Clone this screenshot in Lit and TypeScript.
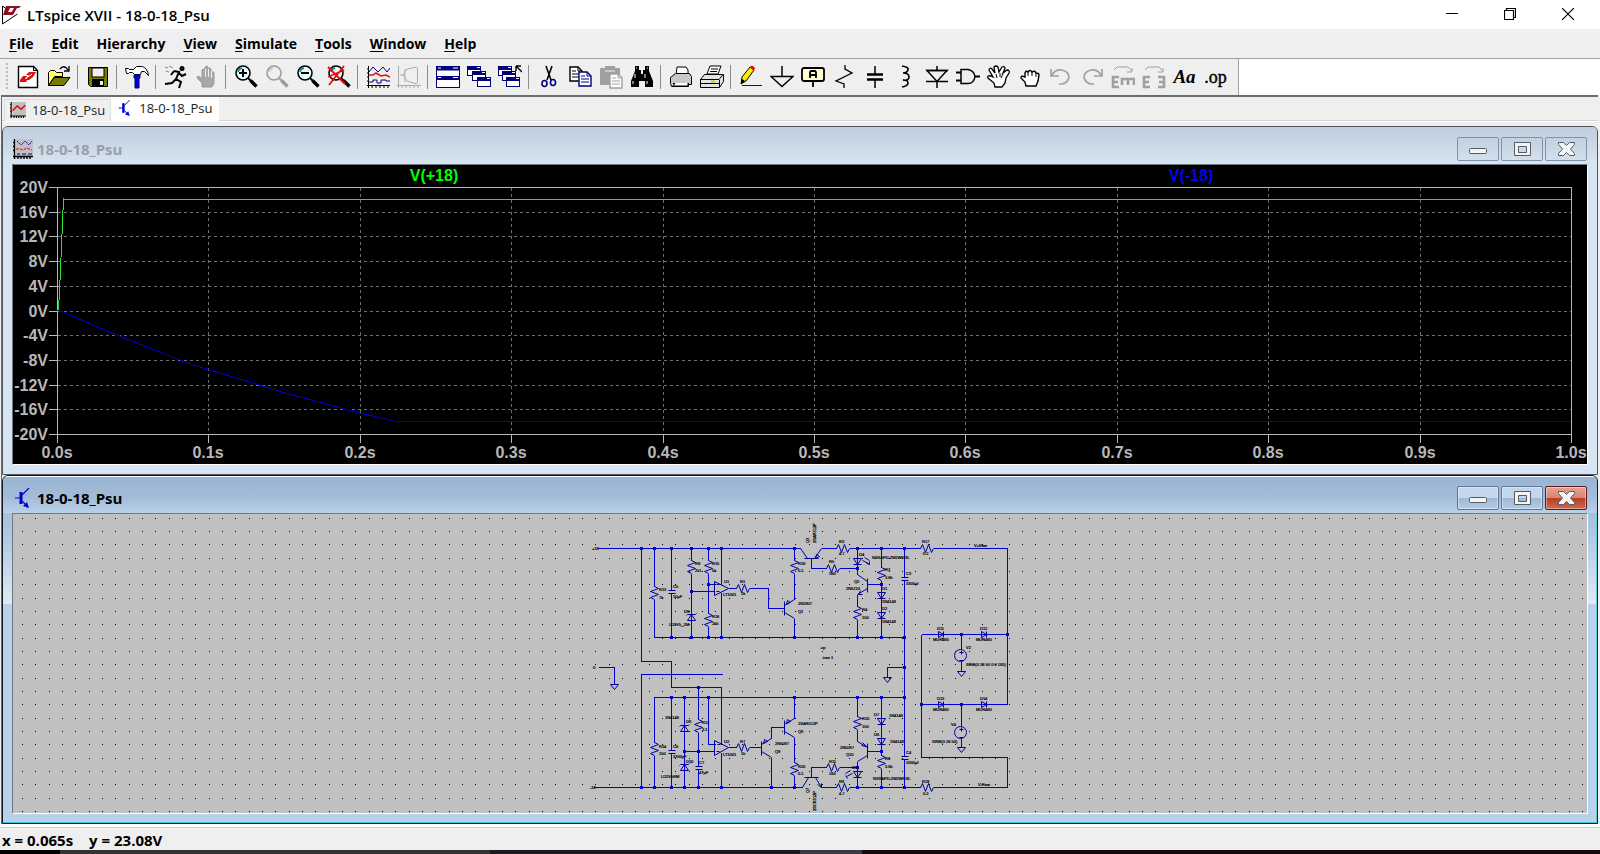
import { LitElement, html, svg, css, TemplateResult } from "lit";
import { customElement } from "lit/decorators.js";
import { classMap } from "lit/directives/class-map.js";

const lens = (inner: TemplateResult, stroke = "#000", rim = "#008080", fill = "#e8ffff") => svg`
  <circle cx="9" cy="8" r="7" fill=${fill} stroke=${stroke} stroke-width="1.6"/>
  <path d="M4 7a5 5 0 0 1 4-4" fill="none" stroke=${rim} stroke-width="1.4"/>
  <path d="M14 13l3 3" stroke=${stroke} stroke-width="2"/><path d="M16.500 15.500l6 6" stroke=${stroke} stroke-width="3.400"/>${inner}`;

const miniWindow = (x: number, y: number) => svg`
  <rect x=${x + 0.5} y=${y + 0.5} width="13" height="9" fill="#fff" stroke="#00007b"/>
  <path d=${`M${x} ${y + 2}h14`} stroke="#00007b" stroke-width="4"/>
  <path d=${`M${x + 10} ${y + 1.5}h3`} stroke="#fff"/>`;

const sheet = (x: number, y: number, c: string) => svg`
  <path d=${`M${x} ${y}h8l4 4v10h-12z`} fill="#fff" stroke=${c} stroke-width="1.4"/>
  <path d=${`M${x + 8} ${y}v4h4M${x + 2} ${y + 4}h4M${x + 2} ${y + 7}h8M${x + 2} ${y + 10}h8`} fill="none" stroke=${c}/>`;

const ICONS: Record<string, TemplateResult> = {
  new: svg`<path d="M2.500 1.500h15l4 4v17h-19z" fill="#fff" stroke="#000" stroke-width="1.400"/><path d="M17.500 1.500v4h4" fill="none" stroke="#000"/>
    <path d="M4 15l3-4h4l-2 3h3l-2 3h-6zM10 10l3-3h7l-3 5-4 3h-3l3-5z" fill="#e01010"/><path d="M12 12l4-3" stroke="#fff"/>`,
  open: svg`<path d="M1.500 20.500v-13l2-2h4l2 2h6v4h-8z" fill="#ffff66" stroke="#000"/><path d="M1.500 20.500l6-8h15.500l-6 8z" fill="#7b7b00" stroke="#000"/>
    <path d="M13 4q4-5 8 1M22 1v5h-5" fill="none" stroke="#000" stroke-width="1.300"/>`,
  save: svg`<path d="M2.500 2.500h19v19h-17l-2-2z" fill="#7b7b00" stroke="#000"/><rect x="6" y="3" width="12" height="9" fill="#efefef" stroke="#000"/><rect x="6" y="14" width="12" height="7" fill="#000"/><rect x="14" y="16" width="3" height="4" fill="#efefef"/>`,
  hammer: svg`<path d="M0.500 3.500h3l1 1h4l3-3h6q5 2 6 9l-4-4h-3l-1 3h-6l-2-2h-3l-1 1h-2z" fill="#fff" stroke="#000"/><path d="M10 10h5v3h-1v10h-4v-10h-1v-3" fill="#0000d8" stroke="#00007b"/>`,
  run: svg`<circle cx="18" cy="3.500" r="2.500"/><path d="M10 6l5 1-3 7 5 3-2 6M12 14l-4 4-7 1M15 8l3 3 4-2M10 6l-3 4" fill="none" stroke="#000" stroke-width="2"/><path d="M1 2l3 1M5 1l4 2M2 6l3 1" stroke="#888"/>`,
  halt: svg`<path d="M7 22v-4l-5-5q0-3 3-1l2 2v-9q1-2 3 0v-3q2-2 3 0v2q2-2 3 0v3q3-1 3 1v10l-2 4z" fill="#a8a8a8" stroke="#999"/><path d="M10.500 4v8M13.500 4v8M16.500 6v7" stroke="#efefef"/>`,
  zoomIn: svg`${lens(svg`<path d="M5 8h8M9 4v8" stroke="#000" stroke-width="2"/>`)}`,
  zoom: svg`${lens(svg``, "#9c9c9c", "#c4c4c4", "#efefef")}`,
  zoomOut: svg`${lens(svg`<path d="M5 8h8" stroke="#000" stroke-width="2"/>`)}`,
  zoomFit: svg`${lens(svg`<path d="M1 2l17 17M17 1l-15 19M1 12l16-7" stroke="#e01010" stroke-width="1.800"/>`)}`,
  plot: svg`<path d="M1 20.500h23M2.500 1v22M6 21v2M10 21v2M14 21v2M18 21v2M22 21v2M1 4h2M1 8h2M1 12h2M1 16h2" stroke="#000"/>
    <path d="M3 7l4-5 5 5 5-5 4 5 3-4" fill="none" stroke="#0000a0"/><path d="M3 10h4l3-2 5 3 5-1 4 2" fill="none" stroke="#e01010" stroke-width="1.500"/><path d="M3 17h4v-2h4v3h4v-3h5v1h4" fill="none" stroke="#00007b"/>`,
  fft: svg`<path d="M0 20.500h24M1.500 1v22M5 21v2M9 21v2M13 21v2M17 21v2M21 21v2M20.500 3v15M3 10h3l4-6 10-2M6 10l4 6 10 3M8 4v13" fill="none" stroke="#aaa"/>`,
  tile: svg`<rect x="0.500" y="1.500" width="23" height="21" fill="#fff" stroke="#00007b"/><path d="M0 3.500h24M0 13h24" stroke="#00007b" stroke-width="4"/><path d="M2 3h3M17 3h5M2 12.500h3M17 12.500h5" stroke="#fff"/>`,
  cascade: svg`${miniWindow(0, 1)}${miniWindow(5, 6)}${miniWindow(10, 12)}`,
  closeAll: svg`${miniWindow(0, 1)}${miniWindow(4, 6)}${miniWindow(8, 12)}<path d="M18 1h5M18 1v5M18 1l6 6" stroke="#000" stroke-width="1.400"/>`,
  cut: svg`<path d="M9 1l5 14M15 1l-5 14" stroke="#000" stroke-width="1.600"/><ellipse cx="7.500" cy="18.500" rx="2.500" ry="3" fill="none" stroke="#00007b" stroke-width="1.600"/><ellipse cx="16" cy="17.500" rx="2.500" ry="3" fill="none" stroke="#00007b" stroke-width="1.600"/>`,
  copy: svg`${sheet(2, 2, "#000")}${sheet(11, 7, "#00007b")}`,
  paste: svg`<rect x="1" y="3" width="20" height="17" rx="1" fill="#a0a0a0"/><path d="M7 4v-2h8v2" stroke="#a0a0a0" stroke-width="2" fill="none"/><path d="M6 6h10" stroke="#efefef"/>${sheet(11, 9, "#a0a0a0")}`,
  find: svg`<path d="M5 1h4v4h2v4h2v-4h2v-4h4v5l4 10v6h-8v-6h-6v6h-8v-6l4-10z"/><path d="M6 3h1M17 3h1M5 9v4M15 9v4M3 16v3M17 16v3" stroke="#fff"/>`,
  preview: svg`<path d="M7 10l1-8h9l2 3v5" fill="#fff" stroke="#000"/><path d="M1.500 12.500l5-4h14l2 3v8h-3v2h-17l-1-3z" fill="#c8c8c8" stroke="#000"/><path d="M4 18.500h16" stroke="#000"/><path d="M6 18l-2 3h15v-3" fill="#fff" stroke="#000"/>`,
  print: svg`<path d="M7 9l3-8h11l-3 8z" fill="#fff" stroke="#000"/><path d="M11 4h7M10 6.500h7" stroke="#000"/><path d="M0.500 14.500l4-5h19v7l-4 6h-19z" fill="#e4e4e4" stroke="#000"/><path d="M0 14.500h19l4-5M19.500 15v7M1 18.500h18" fill="none" stroke="#000"/><path d="M11 16.500h4" stroke="#d8c800" stroke-width="2"/>`,
  wire: svg`<path d="M3 12l8-10 4 3-8 11-5 3z" fill="#ffee00" stroke="#000"/><path d="M11 2q2-3 5 1l-1 3z" fill="#e01010"/><path d="M2 19l1-5 3 2z" fill="#000"/><path d="M3 20.500h20" stroke="#0000d8"/>`,
  ground: svg`<path d="M12 1v10" stroke="#000" stroke-width="1.500"/><path d="M1 11.500h22l-11 10z" fill="none" stroke="#000" stroke-width="1.500"/>`,
  label: svg`<rect x="1" y="3" width="22" height="13" rx="2" fill="#ffffd0" stroke="#000" stroke-width="1.800"/><path d="M12 16v6M9 13v-6l1-1h4l1 1v6M9 10h6" fill="none" stroke="#000" stroke-width="1.800"/>`,
  resistor: svg`<path d="M13 0v4l7 4-16 8 8 3v4" fill="none" stroke="#000" stroke-width="1.300"/>`,
  capacitor: svg`<path d="M12 1v8M12 15v8" stroke="#000" stroke-width="1.500"/><path d="M4 9.500h16M4 14.500h16" stroke="#000" stroke-width="2.400"/>`,
  inductor: svg`<path d="M8 1q7 1 6 4t-5 3q6 0 6 4t-6 3q5 0 5 3t-6 4" fill="none" stroke="#000" stroke-width="1.600"/>`,
  diode: svg`<path d="M12 1v4M12 16v7M1 16.500h22M1 5.500h22" stroke="#000" stroke-width="1.500"/><path d="M2 5.500h20l-10 11z" fill="none" stroke="#000" stroke-width="1.500"/>`,
  component: svg`<path d="M5 4.500h7q6 1 7 7-1 7-7 7h-7z" fill="#efefef" stroke="#000" stroke-width="1.500"/><path d="M0 7.500h5M0 15.500h5M19 11.500h5" stroke="#000" stroke-width="1.800"/>`,
  move: svg`<path d="M8 22l-1-4-6-5q-1-3 3-2l2 1-4-7q1-3 3-1l3 4-1-6q2-2 4 0l1 5 3-5q3-1 3 1l-2 5 4-3q3 0 2 3l-3 5-1 5-3 4z" fill="#fff" stroke="#000" stroke-width="1.300"/><path d="M9 9l1 4M13 8v4M16 9l-2 4" stroke="#000"/>`,
  drag: svg`<path d="M8 21l-1-4-4-4q0-3 4-1v-4q1-3 3-1 2-3 4 0 3-2 4 1 3 0 3 2l-1 6-2 5z" fill="#fff" stroke="#000" stroke-width="1.400"/><path d="M10 7v4M14 7v4M18 8v4" stroke="#000"/>`,
  undo: svg`<path d="M3 10q3-6 10-5 7 2 7 7-1 6-7 7h-3M2 4v7h8" fill="none" stroke="#a0a0a0" stroke-width="1.700"/>`,
  redo: svg`<path d="M21 10q-3-6-10-5-7 2-7 7 1 6 7 7h3M22 4v7h-8" fill="none" stroke="#a0a0a0" stroke-width="1.700"/>`,
  rotate: svg`<path d="M3 5l3-3h11l4 4M21 3v4h-5" fill="none" stroke="#a0a0a0"/><path d="M8 12h-6v10h6M2 17h5M11 20v-6h12v6M17 14v6" fill="none" stroke="#a0a0a0" stroke-width="2.600"/>`,
  mirror: svg`<path d="M3 5l3-3h11l4 4M21 3v4h-5" fill="none" stroke="#a0a0a0"/><path d="M8 12h-6v10h6M2 17h5M16 12h6v10h-6M22 17h-5" fill="none" stroke="#a0a0a0" stroke-width="2.600"/>`,
};

const TOOLS: string[][] = [
  ["new", "open"], ["save"], ["hammer"], ["run", "halt"], ["zoomIn", "zoom", "zoomOut", "zoomFit"], ["plot", "fft"],
  ["tile", "cascade", "closeAll"], ["cut", "copy", "paste", "find"], ["preview", "print"],
  ["wire", "ground", "label", "resistor", "capacitor", "inductor", "diode", "component", "move", "drag", "undo", "redo", "rotate", "mirror", "text", "op"],
];

const chartIcon = svg`<rect x="3" y="0" width="17" height="17" fill="#c0c0c0"/><path d="M1.500 0v20M0 17.500h20M5 18v2M8 18v2M11 18v2M14 18v2M17 18v2M0 3.500h2M0 7.500h2M0 11.500h2" stroke="#000" stroke-width="1.400"/>`;
const transistorIcon = svg`<path d="M0 10h6M7 7l7-7M7 13l6 6" stroke="#0000d0" stroke-width="1.200"/><path d="M6 4v12" stroke="#0000d0" stroke-width="3"/><path d="M14 20l-6-2 4-4z" fill="#0000d0"/>`;

@customElement("tool-bar")
class ToolBar extends LitElement {
  static styles = css`
    :host { display: flex; background: #fff; border-top: 1px solid #a0a0a0; }
    .bar { display: flex; align-items: center; height: 36px; padding: 0 7px 0 6px; background: #efefef; border-right: 1px solid #a0a0a0; }
    .grip { width: 2px; height: 28px; margin-right: 4px; background: repeating-linear-gradient(#bbb 0 2px, transparent 2px 4px); }
    .tool { display: grid; place-items: center; width: 31px; height: 30px; padding: 0; border: 0; background: none; }
    .icon { width: 24px; height: 24px; display: block; }
    .sep { width: 1px; height: 24px; margin: 0 4px 0 3px; background: #8c8c8c; }
    .aa { font: italic bold 19px/24px "Liberation Serif", serif; color: #000; }
    .op { font: 18px/20px "Liberation Serif", serif; color: #000; -webkit-text-stroke: 0.4px #000; }
  `;
  private face(name: string) {
    if (name === "text") return html`<span class="aa">Aa</span>`;
    if (name === "op") return html`<span class="op">.op</span>`;
    return html`<svg class="icon" viewBox="0 0 24 24" aria-hidden="true">${ICONS[name]}</svg>`;
  }
  render() {
    return html`<div class="bar" role="toolbar"><span class="grip"></span>
      ${TOOLS.map((g, i) => html`${i ? html`<span class="sep"></span>` : ""}${g.map((n) => html`<button class="tool" aria-label=${n}>${this.face(n)}</button>`)}`)}
    </div>`;
  }
}

@customElement("wave-plot")
class WavePlot extends LitElement {
  static styles = css`
    :host { display: block; background: #000; overflow: hidden; }
    .plot { display: block; width: 100%; height: 100%; font: bold 16px "Liberation Sans", Arial, sans-serif; fill: #b8b8b8; }
    .axis { stroke: #b8b8b8; fill: none; shape-rendering: crispEdges; }
    .grid { stroke: #707070; stroke-dasharray: 3 3; shape-rendering: crispEdges; }
    .pos { stroke: #2ce02c; fill: none; shape-rendering: crispEdges; }
    .neg { stroke: #0000c8; fill: none; shape-rendering: crispEdges; }
    .lpos { fill: #00ff00; }
    .lneg { fill: #0000ff; }
  `;
  render() {
    const ys = [187, 212, 236, 261, 286, 311, 335, 360, 385, 409, 434];
    const xs = [57, 208, 360, 511, 663, 814, 965, 1117, 1268, 1420, 1571];
    return html`<svg class="plot" viewBox="13 165 1574 299">
      ${ys.slice(1, -1).map((y) => svg`<path class="grid" d=${`M58 ${y}.5H1571`}/>`)}
      ${xs.slice(1, -1).map((x) => svg`<path class="grid" d=${`M${x}.5 188V434`}/>`)}
      <rect class="axis" x="57.500" y="187.500" width="1514" height="247"/>
      ${ys.map((y, i) => svg`<path class="axis" d=${`M49 ${y}.5h8`}/><text x="48" y=${y + 6} text-anchor="end">${20 - 4 * i}V</text>`)}
      ${xs.map((x, i) => svg`<path class="axis" d=${`M${x}.5 435v8`}/><text x=${x} y="458" text-anchor="middle">${(i / 10).toFixed(1)}s</text>`)}
      <path class="pos" d="M58.500 310L60.500 270 63.500 198.500 65 199.500H1571"/>
      <path class="neg" d="M57 310.500L63 312 100 328 143 345.500 185 362 208 369.500 240 379 285 393 330 405 360 413 392 420.500 396 421.500H1571"/>
      <text class="lpos" x="434" y="181" text-anchor="middle">V(+18)</text>
      <text class="lneg" x="1191" y="181" text-anchor="middle">V(-18)</text>
    </svg>`;
  }
}

const zigV = (x: number, y: number) => `M${x} ${y}l4 2-8 3 8 3-8 3 4 2`;
const zigH = (x: number, y: number) => `M${x} ${y}l2-4 3 8 3-8 3 8 2-4`;
const diodeV = (x: number, y: number) => `M${x - 4} ${y}h8l-4 6zM${x - 4} ${y + 6}h8`;
const zenerV = (x: number, y: number) => `M${x - 4} ${y + 6}h8l-4-6zM${x - 5} ${y + 1}l1-1h8l1-1`;
const diodeH = (x: number, y: number) => `M${x} ${y - 3}v6l5-3zM${x + 5} ${y - 3}v6`;
const gnd = (x: number, y: number) => `M${x - 4} ${y}h8l-4 5z`;
const caps = (x: number, y: number) => `M${x - 3} ${y}h7M${x - 3} ${y + 3}h7`;

const WIRES = [
  "M597 548H800M641 548V661H671V687H721V744M641 787V674H722M598 667H614V684",
  "M654 548V586M654 599V637H904M671 548V590M671 593V637M691 548V560M691 573V637M708 548V560M708 573V613M708 626V637M721 548V584M721 592V637",
  "M708 584H714M691 591H714M728 588H736M749 588H768V608H784M794 548V560M794 573V599M794 618V637",
  "M811 558V568H826M839 568H857M821 548H836M849 548H920M933 548H1007V704H921M857 548V574M857 594V606M857 619V637M867 584H881M881 548V567M881 580V637",
  "M904 548V577M904 580V756M904 759V787M904 667H887V677M921 634V757H1007V787H933M921 634H1007M961 634V671M961 704V747",
  "M654 742V697H904M654 755V787M671 697V750M671 753V787M684 697V787M698 687V719M698 732V766M698 769V787M684 751H714M708 697V744H714M721 752V787",
  "M728 747H736M749 747H761M771 738V727H784M771 757V787M794 697V718M794 737V762M794 775V787M593 787H802M811 777V767H826M839 767H857M821 787H836M849 787H920",
  "M857 697V716M857 729V741M857 761V787M881 697V755M881 768V787M867 751H881",
].join("");

const PARTS = [
  zigV(654, 586), zigV(691, 560), zigV(708, 560), zigV(708, 613), zigV(794, 560), zigV(857, 606), zigV(881, 567),
  zigV(654, 742), zigV(698, 719), zigV(794, 762), zigV(857, 716), zigV(881, 755),
  zigH(736, 588), zigH(736, 747), zigH(826, 568), zigH(836, 548), zigH(920, 548), zigH(826, 767), zigH(836, 787), zigH(920, 787),
  caps(671, 590), caps(671, 750), caps(698, 766), caps(904, 577), caps(904, 756),
  zenerV(691, 614), zenerV(684, 725), zenerV(684, 764), diodeV(857, 558), diodeV(857, 771), diodeV(881, 592), diodeV(881, 612), diodeV(881, 718), diodeV(881, 738),
  diodeH(938, 634), diodeH(981, 634), diodeH(938, 704), diodeH(981, 704), gnd(614, 684), gnd(887, 677), gnd(961, 671), gnd(961, 747),
  "M714 581v14l14-7zM714 740v15l14-8zM716 584h3M716 591h3M717 744h3M716 751h3",
  "M784 601v14M784 605l10-6M784 612l10 6M786 604l1-4 3 2zM800 548l7 10M804 558h14M814 558l7-10M815 558l1-4 3 2z",
  "M867 578v14M857 574l10 7M867 588l-10 6M860 590l-2 4h4M761 741v14M761 744l10-6M761 751l10 6M763 743l1-4 3 2z",
  "M784 720v14M784 724l10-6M784 731l10 6M786 723l1-4 3 2zM802 787l6-10M804 777h14M815 777l6 10M817 784l4 3v-4",
  "M867 743v15M857 741l10 6M867 755l-10 6M862 742l4 4-5-1M862 560l6 3M864 557l5 3M866 563l3 1v-3M852 773l-6 3M850 770l-5 3M847 778l-2-3",
].join("");

const DOTS: number[][] = [
  ...[641, 654, 671, 691, 708, 721, 794, 857, 881, 904].map((x) => [x, 548]),
  ...[671, 691, 708, 721, 794, 857, 881, 904].map((x) => [x, 637]),
  ...[671, 684, 708, 794, 857, 881, 904].map((x) => [x, 697]),
  ...[641, 654, 671, 684, 698, 721, 771, 794, 857, 881, 904].map((x) => [x, 787]),
  [708, 584], [691, 591], [857, 568], [881, 584], [904, 667], [961, 634], [1007, 634], [921, 704], [961, 704], [698, 687], [684, 751], [698, 751], [857, 767], [881, 751],
];

const NOTES: [number, number, string][] = [
  [592, 550, "+18"], [593, 669, "0"], [590, 789, "-18"], [659, 591, "R13"], [659, 599, "7k"], [673, 588, "C5"], [673, 598, "10µF"], [695, 565, "R9"], [695, 572, "2k1"],
  [712, 565, "R15"], [712, 572, "5k"], [684, 613, "D9"], [669, 626, "LD2V5_2M"], [712, 618, "R16"], [712, 625, "2k5"], [724, 583, "U1"], [723, 596, "LT1001"],
  [740, 583, "R1"], [741, 595, "1k"], [798, 565, "R18"], [798, 572, "0.1"], [798, 605, "2N2907"], [798, 613, "Q1"], [839, 543, "R3"], [839, 555, "4.7"],
  [829, 563, "R5"], [829, 575, "160"], [859, 556, "D4"], [872, 559, "NSSAF1LZM2WKGL"], [885, 571, "R2"], [885, 579, "3.9k"], [854, 583, "Q2"], [846, 590, "2N5210"],
  [862, 611, "R4"], [862, 619, "150"], [882, 590, "D1"], [882, 603, "1N4148"], [882, 610, "D2"], [882, 623, "1N4148"], [906, 575, "C3"], [906, 585, "3300µf"],
  [922, 543, "R17"], [923, 555, "0.2"], [974, 547, "V+Raw"], [937, 630, "D11"], [933, 641, "MUR460"], [980, 630, "D12"], [976, 641, "MUR460"],
  [966, 649, "V2"], [966, 666, "SINE(0 26 50 0 0 180)"], [820, 649, ".op"], [822, 659, ".tran 1"], [659, 748, "R14"], [659, 755, "150"], [665, 719, "1N4148"],
  [686, 723, "D8"], [686, 763, "D10"], [661, 778, "LD2V5RM"], [673, 748, "C6"], [673, 758, "3300pF"], [702, 724, "R12"], [702, 731, "3.1"], [699, 764, "C7"],
  [699, 774, "47µF"], [724, 743, "U2"], [723, 756, "LT1001"], [740, 743, "R7"], [741, 755, "1k"], [775, 745, "2N5087"], [775, 753, "Q9"], [798, 725, "2SAR512P"],
  [798, 733, "Q8"], [798, 768, "R20"], [798, 775, "0.1"], [829, 763, "R11"], [829, 775, "160"], [839, 783, "R8"], [839, 795, "4.7"], [874, 716, "D7"],
  [889, 717, "1N4148"], [874, 736, "D6"], [890, 743, "1N4148"], [862, 720, "R10"], [862, 728, "150"], [840, 749, "2N5087"], [846, 756, "Q10"], [885, 760, "R6"],
  [885, 768, "3.9k"], [873, 780, "NSSAF1LZM2WKGL"], [852, 769, "D5"], [906, 754, "C4"], [906, 764, "3300µf"], [922, 783, "R19"], [923, 795, "0.2"],
  [978, 786, "V-Raw"], [937, 700, "D13"], [933, 711, "MUR460"], [980, 700, "D14"], [976, 711, "MUR460"], [951, 726, "V4"], [932, 743, "SINE(0 26 50)"],
];
const VERTICAL_NOTES: [number, number, string][] = [[809, 543, "Q3"], [816, 543, "2SAR512P"], [809, 793, "Q7"], [816, 811, "2SCR512P"]];

@customElement("schematic-view")
class SchematicView extends LitElement {
  static styles = css`
    :host { display: block; background: #c0c0c0; overflow: hidden; }
    .sheet { display: block; width: 100%; height: 100%; font: 4px "Liberation Sans", Arial, sans-serif; }
    .wire { stroke: #0000d8; fill: none; shape-rendering: crispEdges; }
    .part { stroke: #0000a0; fill: none; }
    .node { fill: #0000d8; }
    .note { fill: #000; stroke: #000; stroke-width: 0.2px; }
  `;
  render() {
    const mark = [2, 15, 29].flatMap((x) => [3, 16, 29].map((y) => `M${x} ${y}h1v1h-1z`)).join("");
    return html`<svg class="sheet" viewBox="13 514 1574 299">
      <defs><pattern id="snap" x="20" y="515" width="40" height="40" patternUnits="userSpaceOnUse"><path d=${mark}/></pattern></defs>
      <rect x="-2000" y="-2000" width="6000" height="6000" fill="url(#snap)"/>
      <g transform="translate(0.5 0.5)">
        <path class="wire" d=${WIRES}/><path class="part" d=${PARTS}/>
        ${[655, 732].map((y) => svg`<circle cx="960" cy=${y} r="6" fill="#c0c0c0" stroke="#0000a0"/><path class="part" d=${`M959 ${y - 3}h4M961 ${y - 5}v4M959 ${y + 5}h4`}/>`)}
        ${DOTS.map(([x, y]) => svg`<rect class="node" x=${x - 1.5} y=${y - 1.5} width="3" height="3"/>`)}
      </g>
      ${NOTES.map(([x, y, t]) => svg`<text class="note" x=${x} y=${y}>${t}</text>`)}
      ${VERTICAL_NOTES.map(([x, y, t]) => svg`<text class="note" transform=${`translate(${x} ${y}) rotate(-90)`}>${t}</text>`)}
    </svg>`;
  }
}

@customElement("child-window")
class ChildWindow extends LitElement {
  static properties = { active: { type: Boolean, reflect: true }, heading: {} };
  declare active: boolean;
  declare heading: string;
  static styles = css`
    :host { display: flex; flex-direction: column; min-height: 0; overflow: hidden; border: 1px solid #4c5560; border-radius: 6px 6px 0 0; background: #d7e4f2; }
    :host([active]) { border-color: #101820; background: linear-gradient(#9ab4d2 0, #b0c8e2 60px, #dfeaf6 128px, #b9d1ea 128px); box-shadow: inset 0 -1px #40c8d8, inset -1px 0 #60d0e0; }
    .head { display: flex; align-items: center; gap: 4px; height: 37px; padding: 7px 10px 0; box-sizing: border-box; background: linear-gradient(#bfcddc, #d7e4f2); }
    :host([active]) .head { background: linear-gradient(#fff 0 1px, #99b4d1 1px, #a4bcd9 60%, #b9d1ea); }
    .icon { width: 20px; height: 20px; }
    .title { flex: 1; margin: 0; font: 700 15px/20px "Open Sans", sans-serif; color: #98a0a8; }
    :host([active]) .title { color: #000; }
    .controls { display: flex; gap: 2px; }
    .ctl { display: grid; place-items: center; width: 42px; height: 24px; padding: 0; border: 1px solid #8393aa; border-radius: 2px; background: linear-gradient(#c3d1e0, #d2dfec); }
    :host([active]) .ctl { border-color: #5f7896; background: linear-gradient(#c2d6ec 48%, #9db8d4 50%, #b4cce6); box-shadow: inset 0 0 0 1px #ffffff66; }
    :host([active]) .close { border-color: #5a1c1c; background: linear-gradient(#e8a393 0, #d98573 48%, #b93a22 50%, #cf6a4c); }
    .glyph { width: 20px; height: 18px; }
    .body { flex: 1; min-height: 0; display: grid; margin: 0 9px 9px; border: 1px solid; border-color: #707880 #fff #fff #707880; }
  `;
  render() {
    return html`<header class="head">
        <svg class="icon" viewBox="0 0 20 20" aria-hidden="true">${this.active
          ? svg`<g transform="translate(2 0)">${transistorIcon}</g>`
          : svg`${chartIcon}<path d="M4 2l4 4 4-4 4 4 3-4" fill="none" stroke="#0000d0" stroke-dasharray="2 1"/><path d="M3 10h4l3 1 4-2 5 2" fill="none" stroke="#e01010" stroke-dasharray="3 1"/><path d="M4 15h3M9 15h4M15 15h4" stroke="#00007b"/>`}</svg>
        <h2 class="title">${this.heading}</h2>
        <div class="controls">
          <button class="ctl" aria-label="Minimize"><svg class="glyph" viewBox="0 0 20 18"><rect x="1.500" y="8.500" width="17" height="5" rx="1" fill="#f4f4f4" stroke="#555c66"/></svg></button>
          <button class="ctl" aria-label="Maximize"><svg class="glyph" viewBox="0 0 20 18"><path d="M2.500 2.500h16v13h-16zM6.500 6.500v6h8v-6z" fill="#f4f4f4" fill-rule="evenodd" stroke="#555c66"/></svg></button>
          <button class="ctl close" aria-label="Close"><svg class="glyph" viewBox="0 0 20 18"><path d="M2.500 2.500h5l3 3 3-3h5v2l-4 4.500 4 4.500v2h-5l-3-3-3 3h-5v-2l4-4.500-4-4.500z" fill="#f4f4f4" stroke="#555c66"/></svg></button>
        </div>
      </header>
      <div class="body"><slot></slot></div>`;
  }
}

@customElement("app-root")
class AppRoot extends LitElement {
  static styles = css`
    :host { display: flex; flex-direction: column; min-height: 100vh; background: #efefef; color: #000; font: 600 15px/20px "Open Sans", sans-serif; }
    .titlebar { display: flex; align-items: center; height: 29px; padding: 0 3px 0 1px; background: #fff; }
    .logo { width: 20px; height: 20px; margin-right: 6px; }
    .name { flex: 1; margin: 0; font: inherit; }
    .sys { width: 58px; height: 28px; padding: 2px 0 0; border: 0; background: none; }
    .glyph { width: 12px; height: 12px; }
    .menu { display: flex; height: 29px; }
    .item { padding: 0 9px; border: 0; background: none; font: 700 14px/28px "Open Sans", sans-serif; color: #000; }
    .key { text-decoration: underline; text-underline-offset: 2px; text-decoration-thickness: 1px; }
    .desk { flex: 1; display: flex; flex-direction: column; border: solid #6c6c6c; border-width: 2px 0 0 1px; margin: 0 2px 0 1px; }
    .tabs { display: flex; align-items: flex-end; height: 25px; box-sizing: border-box; padding-left: 2px; border-bottom: 1px solid #fff; box-shadow: inset 0 -1px #d4d4d4; }
    .tab { display: flex; align-items: center; gap: 6px; height: 22px; padding: 0 5px 1px; border: 1px solid #dcdcdc; border-bottom: 0; background: #efefef; font: 13px/20px "Open Sans", sans-serif; color: #222; }
    .current { height: 24px; padding: 0 6px 4px; background: #fff; border-color: #fff; gap: 7px; }
    .tabicon { width: 16px; height: 16px; }
    .current .tabicon { width: 14px; }
    .windows { flex: 1; display: grid; grid-template-rows: 1fr 1fr; padding-top: 4px; }
    .status { display: flex; gap: 16px; height: 26px; box-sizing: border-box; padding: 7px 2px 0; background: linear-gradient(#fff 0 3px, #d0d0d0 3px 4px, #efefef 4px); font-weight: 700; line-height: 18px; }
    .taskbar { height: 4px; background: linear-gradient(90deg, #000 0 60px, #333 60px 490px, #1c1a20 490px 800px, #3a3a44 800px 862px, #140c10 862px); }
  `;
  private menuItem(label: string, key = 0) {
    return html`<button class="item">${label.slice(0, key)}<span class="key">${label[key]}</span>${label.slice(key + 1)}</button>`;
  }
  render() {
    const doc = "18-0-18_Psu";
    return html`
      <header class="titlebar">
        <svg class="logo" viewBox="0 0 20 20" aria-hidden="true"><path d="M1.500 1v18l15-10M1.500 1l4 3" fill="none" stroke="#000"/><path d="M5 1h5l-3 6h4l-2 3h-7zM10 1h10l-2 2h-2l-4 7h-3l4-7h-4z" fill="#8b1020"/></svg>
        <h1 class="name">LTspice XVII - ${doc}</h1>
        <button class="sys" aria-label="Minimize"><svg class="glyph" viewBox="0 0 12 12"><path d="M0 5.500h12" stroke="#000"/></svg></button>
        <button class="sys" aria-label="Restore"><svg class="glyph" viewBox="0 0 12 12"><path d="M0.500 2.500h9v9h-9zM2.500 2.500v-2h9v9h-2" fill="none" stroke="#000" stroke-width="1.200"/></svg></button>
        <button class="sys" aria-label="Close"><svg class="glyph" viewBox="0 0 12 12"><path d="M0 0l12 12M12 0l-12 12" stroke="#000" stroke-width="1.200"/></svg></button>
      </header>
      <nav class="menu">${this.menuItem("File")}${this.menuItem("Edit")}${this.menuItem("Hierarchy", 1)}${this.menuItem("View")}${this.menuItem("Simulate")}${this.menuItem("Tools")}${this.menuItem("Window")}${this.menuItem("Help")}</nav>
      <tool-bar></tool-bar>
      <main class="desk">
        <div class="tabs" role="tablist">
          ${[false, true].map((on) => html`<button role="tab" aria-selected=${on} class=${classMap({ tab: true, current: on })}>
            <svg class="tabicon" viewBox=${on ? "0 0 16 20" : "0 0 20 20"} aria-hidden="true">${on ? transistorIcon : svg`${chartIcon}<path d="M3 11l6-6 5 4 5-5" fill="none" stroke="#e01010" stroke-width="2"/>`}</svg>${doc}</button>`)}
        </div>
        <div class="windows">
          <child-window heading=${doc}><wave-plot></wave-plot></child-window>
          <child-window active heading=${doc}><schematic-view></schematic-view></child-window>
        </div>
      </main>
      <footer class="status"><span>x = 0.065s</span><span>y = 23.08V</span></footer>
      <div class="taskbar"></div>`;
  }
}
